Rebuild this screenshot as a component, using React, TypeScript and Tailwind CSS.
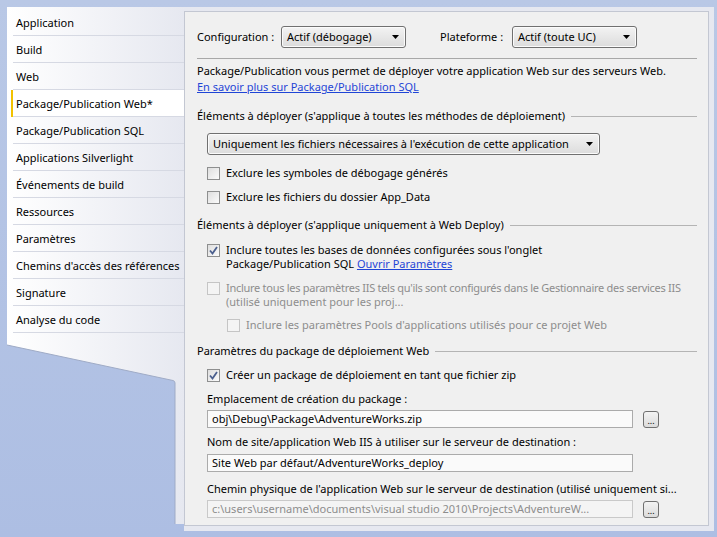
import React from 'react';

const tabs = [
  'Application',
  'Build',
  'Web',
  'Package/Publication Web*',
  'Package/Publication SQL',
  'Applications Silverlight',
  'Événements de build',
  'Ressources',
  'Paramètres',
  "Chemins d'accès des références",
  'Signature',
  'Analyse du code',
];

const Arrow = () => (
  <svg width="7" height="4" viewBox="0 0 7 4">
    <polygon points="0,0 7,0 3.5,4" fill="#000" />
  </svg>
);

const Dropdown = ({ label, width }: { label: string; width: string }) => (
  <div
    className={`${width} h-[22px] flex items-center justify-between pl-[5px] pr-[6px] border border-[#707070] rounded-[3px] bg-gradient-to-b from-[#f3f3f3] to-[#dcdcdc] shadow-[inset_0_0_0_1px_#fbfbfb]`}
  >
    <span className="whitespace-nowrap">{label}</span>
    <Arrow />
  </div>
);

const CheckBox = ({ checked, disabled }: { checked?: boolean; disabled?: boolean }) => (
  <div
    className={`w-[13px] h-[13px] shrink-0 border flex items-center justify-center ${
      disabled
        ? 'border-[#c5c5c5] bg-[#f4f4f4]'
        : 'border-[#8e8f8f] bg-gradient-to-br from-[#dedede] to-[#fbfbfb]'
    }`}
  >
    {checked && (
      <svg width="11" height="11" viewBox="0 0 11 11">
        <path d="M2 5.5 L4.5 8.5 L9 2" fill="none" stroke="#4b5f8e" strokeWidth="1.8" />
      </svg>
    )}
  </div>
);

const Header = ({ text, className }: { text: string; className?: string }) => (
  <div className={`h-[16px] flex items-center ${className ?? ''}`}>
    <span className="whitespace-nowrap">{text}</span>
    <div className="flex-1 h-px bg-[#b4b4b4] ml-[6px]" />
  </div>
);

const Browse = () => (
  <div className="w-[16px] h-[17px] ml-[10px] border border-[#707070] rounded-[3px] bg-gradient-to-b from-[#f3f3f3] to-[#dcdcdc] flex items-end justify-center text-[9px] leading-[9px] pb-[2px]">
    ...
  </div>
);

const TextBox = ({ value, disabled }: { value: string; disabled?: boolean }) => (
  <div
    className={`w-[426px] h-[18px] flex items-center pl-[4px] border whitespace-nowrap overflow-hidden ${
      disabled ? 'border-[#c9c9c9] text-[#8d8d8d] bg-[#f4f4f4]' : 'border-[#ababab] bg-[#fafafa]'
    }`}
  >
    {value}
  </div>
);

export default function App() {
  return (
    <div className="w-[717px] h-[537px] bg-gradient-to-b from-[#b9c8e6] to-[#adbee3] pt-[7px] pl-[7px] font-['Noto_Sans',sans-serif] text-[11px] leading-[16px] text-black overflow-hidden">
      <div className="flex h-[524px]">
        {/* tabs */}
        <div className="w-[177px] flex flex-col">
          <div className="pt-[2px] bg-gradient-to-r from-white to-[#e6e8f0]">
            {tabs.map((t, i) => (
              <div
                key={t}
                className={`relative h-[27px] ml-[6px] pl-[3px] pt-[1px] border-b border-[#d6d9e3] flex items-center whitespace-nowrap ${
                  i === 3 ? 'bg-white' : ''
                }`}
              >
                {i === 3 && <span className="absolute left-[-2px] top-0 bottom-[-1px] w-[2px] bg-[#f2c200]" />}
                {t}
              </div>
            ))}
          </div>
          <svg width="177" height="191" viewBox="0 0 177 191" className="block">
            <defs>
              <linearGradient id="tabg" x1="0" x2="1" y1="0" y2="0">
                <stop offset="0" stopColor="#ffffff" />
                <stop offset="1" stopColor="#e6e8f0" />
              </linearGradient>
            </defs>
            <path d="M0 0 L177 0 L177 191 L168 191 L168 50 Q168 48 166 47.5 L0 12 Z" fill="url(#tabg)" />
            <path d="M0 12 L166 47.5 Q168 48 168 50 L168 191" fill="none" stroke="#9fabc6" strokeWidth="1" />
          </svg>
        </div>

        {/* content frame */}
        <div className="w-[530px] bg-[#e6e8f0] pt-[4px] pr-[5px] pb-[5px]">
          <div className="h-full border border-[#c3c7d2] bg-[#f0f0f0] pl-[12px] pr-[11px] flex flex-col">
            <div className="mt-[14px] flex items-center">
              <span className="w-[84px] whitespace-nowrap">Configuration :</span>
              <Dropdown label="Actif (débogage)" width="w-[125px]" />
              <span className="ml-[34px] w-[72px] whitespace-nowrap">Plateforme :</span>
              <Dropdown label="Actif (toute UC)" width="w-[125px]" />
            </div>
            <div className="mt-[10px] h-px bg-[#a8a8a8]" />
            <div className="mt-[4px] whitespace-nowrap">
              Package/Publication vous permet de déployer votre application Web sur des serveurs Web.
            </div>
            <a className="text-[#1f45d6] underline whitespace-nowrap self-start">
              En savoir plus sur Package/Publication SQL
            </a>
            <Header className="mt-[13px]" text="Éléments à déployer (s'applique à toutes les méthodes de déploiement)" />
            <div className="mt-[9px] ml-[10px]">
              <Dropdown
                label="Uniquement les fichiers nécessaires à l'exécution de cette application"
                width="w-[393px]"
              />
            </div>
            <div className="mt-[10px] ml-[10px] h-[16px] flex items-center gap-[6px]">
              <CheckBox />
              <span>Exclure les symboles de débogage générés</span>
            </div>
            <div className="mt-[8px] ml-[10px] h-[16px] flex items-center gap-[6px]">
              <CheckBox />
              <span>Exclure les fichiers du dossier App_Data</span>
            </div>
            <Header className="mt-[12px]" text="Éléments à déployer (s'applique uniquement à Web Deploy)" />
            <div className="mt-[10px] ml-[10px] flex items-start gap-[6px] leading-[14px]">
              <div className="mt-[1px]">
                <CheckBox checked />
              </div>
              <span className="whitespace-nowrap">
                Inclure toutes les bases de données configurées sous l'onglet
                <br />
                Package/Publication SQL <a className="text-[#1f45d6] underline">Ouvrir Paramètres</a>
              </span>
            </div>
            <div className="mt-[10px] ml-[10px] flex items-start gap-[6px] leading-[14px] text-[#8d8d8d]">
              <div className="mt-[1px]">
                <CheckBox disabled />
              </div>
              <span className="whitespace-nowrap">
                <span className="tracking-[-0.28px]">
                  Inclure tous les paramètres IIS tels qu'ils sont configurés dans le Gestionnaire des services IIS
                </span>
                <br />
                (utilisé uniquement pour les proj...
              </span>
            </div>
            <div className="mt-[8px] ml-[30px] h-[16px] flex items-center gap-[6px] text-[#8d8d8d]">
              <CheckBox disabled />
              <span className="whitespace-nowrap">Inclure les paramètres Pools d'applications utilisés pour ce projet Web</span>
            </div>
            <Header className="mt-[10px]" text="Paramètres du package de déploiement Web" />
            <div className="mt-[8px] ml-[10px] h-[16px] flex items-center gap-[6px]">
              <CheckBox checked />
              <span className="whitespace-nowrap">Créer un package de déploiement en tant que fichier zip</span>
            </div>
            <div className="mt-[8px] ml-[10px] whitespace-nowrap">Emplacement de création du package :</div>
            <div className="mt-[3px] ml-[10px] flex items-center">
              <TextBox value="obj\Debug\Package\AdventureWorks.zip" />
              <Browse />
            </div>
            <div className="mt-[6px] ml-[10px] whitespace-nowrap">
              Nom de site/application Web IIS à utiliser sur le serveur de destination :
            </div>
            <div className="mt-[4px] ml-[10px] flex items-center">
              <TextBox value="Site Web par défaut/AdventureWorks_deploy" />
            </div>
            <div className="mt-[9px] ml-[10px] whitespace-nowrap">
              Chemin physique de l'application Web sur le serveur de destination (utilisé uniquement si...
            </div>
            <div className="mt-[3px] ml-[10px] flex items-center">
              <TextBox disabled value="c:\users\username\documents\visual studio 2010\Projects\AdventureW..." />
              <Browse />
            </div>
          </div>
        </div>
      </div>
    </div>
  );
}
